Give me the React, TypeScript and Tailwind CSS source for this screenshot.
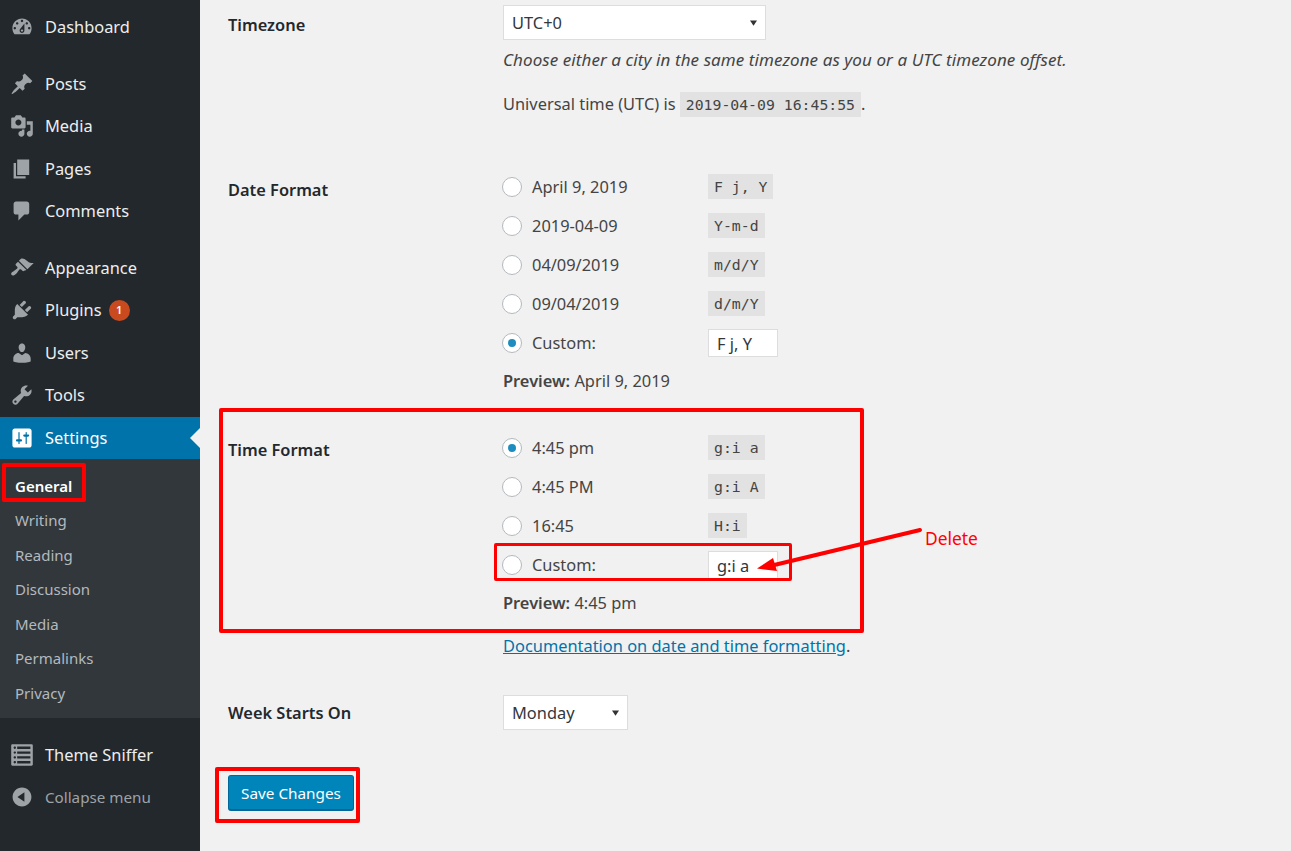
import React from "react";

const I: Record<string, string> = {
  dashboard: "M3.76 16h12.48c1.1-1.37 1.76-3.11 1.76-5 0-4.42-3.58-8-8-8s-8 3.58-8 8c0 1.89.66 3.63 1.76 5zM10 4c.55 0 1 .45 1 1s-.45 1-1 1-1-.45-1-1 .45-1 1-1zM6 6c.55 0 1 .45 1 1s-.45 1-1 1-1-.45-1-1 .45-1 1-1zm8 0c.55 0 1 .45 1 1s-.45 1-1 1-1-.45-1-1 .45-1 1-1zm-5.37 5.55L12 7v6c0 1.1-.9 2-2 2s-2-.9-2-2c0-.57.24-1.08.63-1.45zM4 10c.55 0 1 .45 1 1s-.45 1-1 1-1-.45-1-1 .45-1 1-1zm12 0c.55 0 1 .45 1 1s-.45 1-1 1-1-.45-1-1 .45-1 1-1zm-5 3c0-.55-.45-1-1-1s-1 .45-1 1 .45 1 1 1 1-.45 1-1z",
  post: "M10.44 3.02l1.82-1.82 6.36 6.35-1.83 1.82c-1.05-.68-2.48-.57-3.41.36l-.75.75c-.92.93-1.04 2.35-.35 3.41l-1.83 1.82-2.41-2.41-2.8 2.79c-.42.42-3.38 2.71-3.8 2.29s1.86-3.39 2.28-3.81l2.79-2.79L4.1 9.36l1.83-1.82c1.05.69 2.48.57 3.4-.36l.75-.75c.93-.92 1.05-2.35.36-3.41z",
  media: "M13 11V4c0-.55-.45-1-1-1h-1.67L9 1H5L3.67 3H2c-.55 0-1 .45-1 1v7c0 .55.45 1 1 1h10c.55 0 1-.45 1-1zM7 4.5c1.38 0 2.5 1.12 2.5 2.5S8.38 9.5 7 9.5 4.5 8.38 4.5 7 5.62 4.5 7 4.5zM14 6h5v10.5c0 1.38-1.12 2.5-2.5 2.5S14 17.88 14 16.5s1.12-2.5 2.5-2.5c.17 0 .34.02.5.05V9h-3V6zm-4 8.05V13h2v3.5c0 1.38-1.12 2.5-2.5 2.5S7 17.88 7 16.5 8.12 14 9.5 14c.17 0 .34.02.5.05z",
  page: "M6 15V2h10v13H6zm-1 1h8v2H3V5h2v11z",
  comments: "M5 2h9c1.1 0 2 .9 2 2v7c0 1.1-.9 2-2 2h-2l-5 5v-5H5c-1.1 0-2-.9-2-2V4c0-1.1.9-2 2-2z",
  appearance: "M14.48 11.06L7.41 3.99l1.5-1.5c.5-.56 2.3-.47 3.51.32 1.21.8 1.43 1.28 2.91 2.1 1.18.64 2.45 1.26 4.45.85zm-.71.71L6.7 4.7 4.93 6.47c-.39.39-.39 1.02 0 1.41l1.06 1.06c.39.39.39 1.03 0 1.42-.6.6-1.43 1.11-2.21 1.69-.35.26-.7.53-1.01.84C1.43 13.23.4 14.85 1.4 15.85c1 1 2.62-.03 3.96-1.37.31-.31.58-.66.84-1.01.58-.78 1.09-1.61 1.69-2.21.39-.39 1.02-.39 1.41 0l1.06 1.06c.39.39 1.02.39 1.41 0z",
  plugins: "M13.11 4.36L9.87 7.6 8 5.73l3.24-3.24c.35-.34 1.05-.2 1.56.32.52.51.66 1.21.31 1.55zm-8 1.77l.91-1.12 9.01 9.01-1.19.84c-.71.71-2.63 1.16-3.82 1.16H6.14L4.9 17.26c-.59.59-1.54.59-2.12 0-.59-.58-.59-1.53 0-2.12l1.24-1.24v-3.88c0-1.13.4-3.19 1.09-3.89zm7.26 3.97l3.24-3.24c.34-.35 1.04-.21 1.55.31.52.51.66 1.21.31 1.55l-3.24 3.25z",
  users: "M10 9.25c-2.27 0-2.73-3.44-2.73-3.44C7 4.02 7.82 2 9.97 2c2.16 0 2.98 2.02 2.71 3.81 0 0-.41 3.44-2.68 3.44zm0 2.57L12.72 10c2.39 0 4.52 2.33 4.52 4.53v2.49s-3.65 1.13-7.24 1.13c-3.65 0-7.24-1.13-7.24-1.13v-2.49c0-2.25 1.94-4.48 4.47-4.48z",
  tools: "M16.68 9.77c-1.34 1.34-3.3 1.67-4.95.99l-5.41 6.52c-.99.99-2.59.99-3.58 0s-.99-2.59 0-3.57l6.52-5.42c-.68-1.65-.35-3.61.99-4.95 1.28-1.28 3.12-1.62 4.72-1.06l-2.89 2.89 2.82 2.82 2.86-2.87c.53 1.58.18 3.39-1.08 4.65zM3.81 16.21c.4.39 1.04.39 1.43 0 .4-.4.4-1.04 0-1.43-.39-.4-1.03-.4-1.43 0-.39.39-.39 1.03 0 1.43z",
  settings: "M18 16V4c0-1.1-.9-2-2-2H4c-1.1 0-2 .9-2 2v12c0 1.1.9 2 2 2h12c1.1 0 2-.9 2-2zM8 11h1c.55 0 1 .45 1 1s-.45 1-1 1H8v1.5c0 .28-.22.5-.5.5s-.5-.22-.5-.5V13H6c-.55 0-1-.45-1-1s.45-1 1-1h1V5.5c0-.28.22-.5.5-.5s.5.22.5.5V11zm5-2h-1c-.55 0-1-.45-1-1s.45-1 1-1h1V5.5c0-.28.22-.5.5-.5s.5.22.5.5V7h1c.55 0 1 .45 1 1s-.45 1-1 1h-1v5.5c0 .28-.22.5-.5.5s-.5-.22-.5-.5V9z",
  list: "M2 19h16c.55 0 1-.45 1-1V2c0-.55-.45-1-1-1H2c-.55 0-1 .45-1 1v16c0 .55.45 1 1 1zM4 3c.55 0 1 .45 1 1s-.45 1-1 1-1-.45-1-1 .45-1 1-1zm13 0v2H6V3h11zM4 7c.55 0 1 .45 1 1s-.45 1-1 1-1-.45-1-1 .45-1 1-1zm13 0v2H6V7h11zM4 11c.55 0 1 .45 1 1s-.45 1-1 1-1-.45-1-1 .45-1 1-1zm13 0v2H6v-2h11zM4 15c.55 0 1 .45 1 1s-.45 1-1 1-1-.45-1-1 .45-1 1-1zm13 0v2H6v-2h11z",
  collapse: "M10 2.16c4.33 0 7.84 3.51 7.84 7.84s-3.51 7.84-7.84 7.84S2.16 14.33 2.16 10 5.71 2.16 10 2.16zm2 11.72V6.12L6.18 9.97z",
};

function Icon({ d, white }: { d: string; white?: boolean }) {
  return (
    <svg viewBox="0 0 20 20" className={`w-[24px] h-[24px] shrink-0 ${white ? "fill-white" : "fill-[#9ea3a8]"}`}>
      <path d={d} />
    </svg>
  );
}

function Item({ icon, label, mb }: { icon: string; label: string; mb?: boolean }) {
  return (
    <div className={`flex items-center h-[42.5px] pl-[10px] gap-[11px] text-[#eeeeee] ${mb ? "mb-[14px]" : ""}`}>
      <Icon d={I[icon]} />
      <span>{label}</span>
    </div>
  );
}

function Sub({ label, active }: { label: string; active?: boolean }) {
  return (
    <div className={`h-[34.5px] flex items-center pl-[15px] text-[15px] ${active ? "text-white font-semibold" : "text-[#b4b9be]"}`}>
      {label}
    </div>
  );
}

function Code({ children }: { children: React.ReactNode }) {
  return (
    <code className="inline-block bg-[#e2e2e2] h-[25px] leading-[26px] px-[6px] text-[14.8px] text-[#444] whitespace-pre [font-family:'DejaVu_Sans_Mono',monospace]">
      {children}
    </code>
  );
}

function Radio({ checked }: { checked?: boolean }) {
  return (
    <span className="w-[20px] h-[20px] rounded-full bg-white border border-[#b4b9be] shrink-0 flex items-center justify-center">
      {checked && <span className="w-[8px] h-[8px] rounded-full bg-[#1e8cbe]" />}
    </span>
  );
}

function Opt({ label, code, checked }: { label: string; code: string; checked?: boolean }) {
  return (
    <div className="h-[39px] flex items-center">
      <span className="w-[206px] flex items-center gap-[10px] -ml-[1px]">
        <Radio checked={checked} />
        <span>{label}</span>
      </span>
      <Code>{code}</Code>
    </div>
  );
}

function CustomOpt({ value, checked }: { value: string; checked?: boolean }) {
  return (
    <div className="h-[39px] flex items-center">
      <span className="w-[206px] flex items-center gap-[10px] -ml-[1px]">
        <Radio checked={checked} />
        <span>Custom:</span>
      </span>
      <span className="w-[70px] h-[28px] bg-white border border-[#dddddd] pl-[8px] leading-[27px] text-[#32373c]">{value}</span>
    </div>
  );
}

function Select({ value, w }: { value: string; w: string }) {
  return (
    <div className={`${w} h-[35px] bg-white border border-[#dddddd] flex items-center justify-between pl-[8px] pr-[8px] text-[#32373c]`}>
      <span>{value}</span>
      <svg viewBox="0 0 8 6" className="w-[7px] h-[6px] fill-[#333]"><path d="M0 0h8L4 6z" /></svg>
    </div>
  );
}

function Label({ children, className = "" }: { children: React.ReactNode; className?: string }) {
  return <div className={`w-[275px] shrink-0 font-semibold text-[#23282d] ${className}`}>{children}</div>;
}

export default function App() {
  return (
    <div className="relative flex w-[1291px] h-[851px] overflow-hidden bg-[#f1f1f1] text-[16.4px] leading-[24px] text-[#444] [font-family:'Noto_Sans','Open_Sans',sans-serif]">
      <aside className="w-[200px] shrink-0 bg-[#23282d]">
        <div className="pt-[6px]">
          <Item icon="dashboard" label="Dashboard" mb />
          <Item icon="post" label="Posts" />
          <Item icon="media" label="Media" />
          <Item icon="page" label="Pages" />
          <Item icon="comments" label="Comments" mb />
          <Item icon="appearance" label="Appearance" />
          <div className="flex items-center h-[42.5px] pl-[10px] gap-[11px] text-[#eeeeee]">
            <Icon d={I.plugins} />
            <span>Plugins</span>
            <span className="-ml-[4px] w-[21px] h-[21px] rounded-full bg-[#ca4a1f] text-white text-[11px] font-semibold flex items-center justify-center">1</span>
          </div>
          <Item icon="users" label="Users" />
          <Item icon="tools" label="Tools" />
        </div>
        <div className="relative flex items-center h-[42.5px] pl-[10px] gap-[11px] bg-[#0073aa] text-white">
          <Icon d={I.settings} white />
          <span>Settings</span>
          <span className="absolute right-0 top-[11px] w-0 h-0 border-y-[10px] border-y-transparent border-r-[10px] border-r-[#f1f1f1]" />
        </div>
        <div className="bg-[#32373c] h-[259px] pt-[9.5px]">
          <Sub label="General" active />
          <Sub label="Writing" />
          <Sub label="Reading" />
          <Sub label="Discussion" />
          <Sub label="Media" />
          <Sub label="Permalinks" />
          <Sub label="Privacy" />
        </div>
        <div className="pt-[16px]">
          <Item icon="list" label="Theme Sniffer" />
          <div className="flex items-center h-[41px] pl-[10px] gap-[11px] text-[#9ea3a8]">
            <Icon d={I.collapse} />
            <span className="text-[15.2px]">Collapse menu</span>
          </div>
        </div>
      </aside>

      <main className="flex-1 pl-[28px] pt-[5px]">
        <div className="flex h-[162px]">
          <Label className="pt-[8px]">Timezone</Label>
          <div>
            <Select value="UTC+0" w="w-[263px]" />
            <p className="mt-[8px] italic text-[17px] tracking-[0.08px]">Choose either a city in the same timezone as you or a UTC timezone offset.</p>
            <p className="mt-[20px] flex items-center h-[24px]">
              <span>Universal time (UTC) is&nbsp;</span>
              <Code>2019-04-09 16:45:55</Code>
              <span>.</span>
            </p>
          </div>
        </div>

        <div className="flex h-[254px]">
          <Label className="pt-[11px]">Date Format</Label>
          <div>
            <Opt label="April 9, 2019" code="F j, Y" />
            <Opt label="2019-04-09" code="Y-m-d" />
            <Opt label="04/09/2019" code="m/d/Y" />
            <Opt label="09/04/2019" code="d/m/Y" />
            <CustomOpt value="F j, Y" checked />
            <p className="mt-[7px]"><strong className="font-semibold">Preview:</strong> April 9, 2019</p>
          </div>
        </div>

        <div className="flex h-[274px]">
          <Label className="pt-[17px]">Time Format</Label>
          <div>
            <div className="pt-[7px]" />
            <Opt label="4:45 pm" code="g:i a" checked />
            <Opt label="4:45 PM" code="g:i A" />
            <Opt label="16:45" code="H:i" />
            <CustomOpt value="g:i a" />
            <p className="mt-[7px]"><strong className="font-semibold">Preview:</strong> 4:45 pm</p>
            <p className="mt-[19px]">
              <span className="text-[#0073aa] underline">Documentation on date and time formatting</span>.
            </p>
          </div>
        </div>

        <div className="flex h-[80px]">
          <Label className="pt-[6px]">Week Starts On</Label>
          <Select value="Monday" w="w-[125px]" />
        </div>

        <div className="w-[126px] h-[36px] rounded-[3px] bg-[#0085ba] border border-[#006799] border-b-2 text-white text-[15.3px] flex items-center justify-center">
          Save Changes
        </div>
      </main>

      <div className="absolute left-[2px] top-[463px] w-[84px] h-[39px] border-[4px] border-[#ff0000] rounded-[2px]" />
      <div className="absolute left-[219px] top-[408px] w-[645px] h-[225px] border-[4px] border-[#ff0000] rounded-[2px]" />
      <div className="absolute left-[494px] top-[543px] w-[298px] h-[38px] border-[3.5px] border-[#ff0000] rounded-[2px]" />
      <div className="absolute left-[215px] top-[767px] w-[145px] h-[56px] border-[4px] border-[#ff0000] rounded-[2px]" />
      <svg className="absolute left-[740px] top-[520px] w-[190px] h-[60px]" viewBox="0 0 190 60">
        <path d="M180 10 L30 46" stroke="#ff0000" strokeWidth="4" strokeLinecap="round" />
        <path d="M17 48.5 L33 38 L37 51 Z" fill="#ff0000" />
      </svg>
      <span className="absolute left-[925px] top-[526px] text-[17.4px] text-[#ff0000]">Delete</span>
    </div>
  );
}
